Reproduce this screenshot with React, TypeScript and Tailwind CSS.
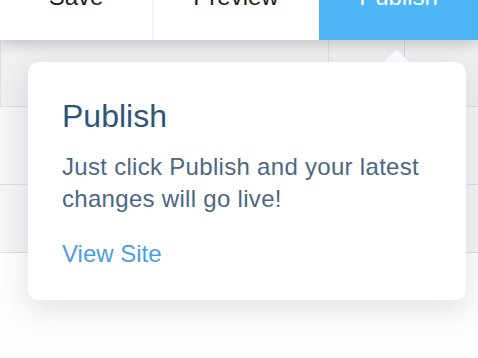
import React from "react";

const font = { fontFamily: '"Liberation Sans", Arial, sans-serif' };

const TopBar: React.FC = () => (
  <div className="relative z-10 flex h-[40px] bg-white shadow-[0_4px_14px_rgba(0,0,0,0.2)]">
    <div className="flex w-[153px] justify-center border-r border-[#eceef0] text-[24px] leading-[32px] text-[#1b1b1b]">
      <span className="-mt-[19px]">Save</span>
    </div>
    <div className="flex w-[166px] justify-center text-[24px] leading-[32px] text-[#1b1b1b]">
      <span className="-mt-[19px]">Preview</span>
    </div>
    <div className="flex flex-1 justify-center bg-[#4db6f5] text-[24px] leading-[32px] text-white">
      <span className="-mt-[19px]">Publish</span>
    </div>
  </div>
);

const Backdrop: React.FC = () => (
  <div className="flex flex-col">
    <div className="flex h-[67px] border-b border-[#dcdfe3] bg-[#eff0f2]">
      <div className="w-[329px] border-r border-l border-[#dcdfe3]" />
      <div className="w-[76px] border-r border-[#d6d9dd]" />
      <div className="flex-1" />
    </div>
    <div className="h-[78px] border-b border-[#dcdfe3] bg-[#f4f5f7]" />
    <div className="h-[68px] border-b border-[#dcdfe3] bg-[#f4f5f7]" />
    <div className="h-[105px] bg-[#fdfdfd]" />
  </div>
);

const PublishPopover: React.FC = () => (
  <>
    <div className="absolute left-[388px] top-[53px] z-20 h-[17px] w-[17px] rotate-45 rounded-tl-[3px] bg-white" />
    <div className="absolute left-[28px] top-[62px] z-20 h-[238px] w-[438px] rounded-[10px] bg-white pl-[34px] pr-[30px] pt-[38px] shadow-[0_8px_30px_rgba(40,50,60,0.14)]">
      <h2 className="text-[32px] leading-none text-[#2c5677]">Publish</h2>
      <p className="mt-[19px] text-[24px] leading-[32px] tracking-[0.3px] text-[#4b6881]">
        Just click Publish and your latest changes will go live!
      </p>
      <a className="mt-[23px] block text-[24px] leading-[32px] text-[#4a9de2]">View Site</a>
    </div>
  </>
);

export default function App() {
  return (
    <div className="relative h-[358px] w-[478px] overflow-hidden bg-white" style={font}>
      <TopBar />
      <Backdrop />
      <PublishPopover />
    </div>
  );
}
